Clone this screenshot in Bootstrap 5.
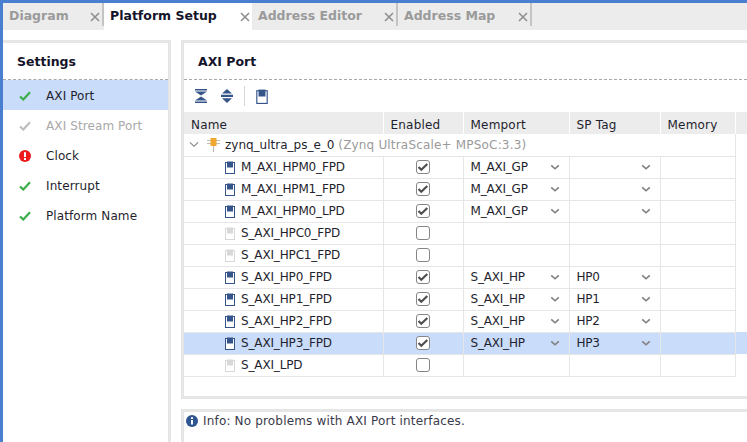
<!DOCTYPE html>
<html lang="en">
<head>
  <meta charset="UTF-8" />
  <meta name="viewport" content="width=device-width, initial-scale=1.0"/>
  <title>Platform Setup</title>
  <link href="https://cdn.jsdelivr.net/npm/bootstrap@5.3.3/dist/css/bootstrap.min.css" rel="stylesheet">
  <style>
    html, body {
      height: 100%;
    }

    body {
      font-family: "DejaVu Sans", sans-serif;
      font-size: 12px;
      color: #1f1f2e;
      background: #fff;
      border-top: 3px solid #4a7fd0;
      border-left: 3px solid #4a7fd0;
      overflow: hidden;
    }

    .tabstrip {
      height: 27px;
      background: #ececec;
      flex-wrap: nowrap;
    }

    .tabstrip .nav-link {
      height: 23px;
      padding: 4px 0 0 6px;
      display: flex;
      align-items: center;
      justify-content: space-between;
      font-weight: 700;
      font-size: 12.5px;
      color: #9a9a9a;
      border-right: 2px solid #c4c4c4;
      border-radius: 0;
    }

    .tabstrip .nav-link.active {
      height: 27px;
      padding-bottom: 4px;
      background: #fff;
      color: #14142a;
      border-right: 0;
    }

    .tab-diagram { width: 101px; }
    .tab-platform { width: 148px; }
    .tab-editor { width: 146px; }
    .tab-map { width: 134px; }

    .tab-close {
      width: 14px;
      height: 14px;
      display: block;
    }

    .workarea {
      padding-top: 10px;
      height: 412px;
    }

    .sidepane {
      width: 168px;
      flex: none;
      border-top: 3px solid #e6e6e6;
      border-right: 3px solid #e6e6e6;
    }

    .pane-title {
      height: 37px;
      padding-top: 2px;
      font-weight: 700;
      font-size: 12.5px;
      color: #14142a;
      border-bottom: 1px dashed #a8a8a8;
    }

    .sidepane .pane-title {
      padding-left: 14px;
    }

    .setting-row {
      height: 30px;
      padding: 2px 0 0 16px;
      gap: 15px;
      letter-spacing: 0.1px;
    }

    .setting-row.current {
      background: #c9dcfa;
    }

    .setting-row.off {
      color: #a8a8a8;
    }

    .mainarea {
      margin-left: 10px;
      min-width: 0;
    }

    .portpane {
      height: 359px;
      flex: none;
      border-top: 3px solid #e6e6e6;
      border-left: 3px solid #e6e6e6;
      border-bottom: 3px solid #e6e6e6;
    }

    .portpane .pane-title {
      padding-left: 14px;
    }

    .toolbar {
      height: 32px;
      padding-left: 11px;
      gap: 13px;
    }

    .tool-sep {
      width: 1px;
      height: 20px;
      background: #d8d8d8;
      margin: 0 -3px 0 -3px;
    }

    .port-table {
      table-layout: fixed;
      width: 563px;
      border-collapse: collapse;
    }

    .port-table th {
      height: 22px;
      padding: 4px 0 0 7px;
      font-weight: 400;
      letter-spacing: 0.2px;
      background: #ececec;
      border-right: 1px solid #fff;
    }

    .port-table td {
      height: 22px;
      padding: 0;
      border-right: 1px solid #e6e6e6;
      border-bottom: 1px solid #e6e6e6;
      vertical-align: middle;
    }

    .port-table td.filler {
      border: 0;
    }

    .port-table th.filler {
      border-right: 0;
    }

    .port-table tr.picked td {
      background: #c9dcfa;
    }

    .tree-cell {
      padding-left: 5px;
    }

    .tree-chevron {
      margin-right: 8px;
    }

    .tree-chip {
      margin-right: 5px;
    }

    .port-name {
      padding-left: 40px;
      gap: 5px;
      white-space: nowrap;
      letter-spacing: -0.15px;
    }

    .dim {
      color: #9a9a9a;
      letter-spacing: 0.18px;
    }

    .tick {
      appearance: none;
      display: block;
      width: 14px;
      height: 14px;
      margin: 0 auto;
      border: 1.5px solid #858585;
      border-radius: 3px;
      background: #fff;
    }

    .tick:checked {
      background: #fff url("data:image/svg+xml,%3Csvg xmlns='http://www.w3.org/2000/svg' viewBox='0 0 14 14'%3E%3Cpath d='M2.500 7l2.800 2.800 6-5.800' fill='none' stroke='%23505050' stroke-width='2.200'/%3E%3C/svg%3E") center/14px no-repeat;
    }

    .pick-cell {
      padding: 0 9px 0 7px;
      letter-spacing: -0.2px;
    }

    .infopane {
      margin-top: 10px;
      flex: 1;
      border-top: 3px solid #e6e6e6;
      border-left: 3px solid #e6e6e6;
      padding-left: 2px;
      gap: 5px;
      color: #3a3a4a;
      letter-spacing: 0.17px;
    }

    .info-mark {
      margin-top: 3px;
    }
  </style>
</head>
<body class="d-flex flex-column">

<svg width="0" height="0" class="position-absolute">
  <symbol id="ok" viewBox="0 0 12 10"><path d="M1 5.500l3.300 3L11 1.200" fill="none" stroke="#3aae4a" stroke-width="2.200"/></symbol>
  <symbol id="okoff" viewBox="0 0 12 10"><path d="M1 5.500l3.300 3L11 1.200" fill="none" stroke="#bdbdbd" stroke-width="2.200"/></symbol>
  <symbol id="port" viewBox="0 0 12 13"><rect x="1.500" y="1.500" width="9" height="11" fill="#fff" stroke="#34548a"/><rect x="3" y="0.500" width="6" height="6" fill="#34548a"/></symbol>
  <symbol id="portoff" viewBox="0 0 12 13"><rect x="1.500" y="1.500" width="9" height="11" fill="#fff" stroke="#d8d8d8"/><rect x="3" y="0.500" width="6" height="6" fill="#d8d8d8"/></symbol>
  <symbol id="down" viewBox="0 0 12 8"><path d="M1.500 1.500L6 5.500l4.500-4" fill="none" stroke="#808080" stroke-width="2"/></symbol>
  <symbol id="cross" viewBox="0 0 14 14"><path d="M3 3l8 8M11 3l-8 8" fill="none" stroke="#8f8f8f" stroke-width="1.600"/></symbol>
</svg>

<nav class="nav tabstrip">
  <a class="nav-link tab-diagram" href="#">Diagram<svg class="tab-close"><use href="#cross"/></svg></a>
  <a class="nav-link tab-platform active" href="#">Platform Setup<svg class="tab-close"><use href="#cross"/></svg></a>
  <a class="nav-link tab-editor" href="#">Address Editor<svg class="tab-close"><use href="#cross"/></svg></a>
  <a class="nav-link tab-map" href="#">Address Map<svg class="tab-close"><use href="#cross"/></svg></a>
</nav>

<div class="d-flex workarea">
  <aside class="sidepane">
    <div class="pane-title d-flex align-items-center">Settings</div>
    <div class="setting-row current d-flex align-items-center"><svg width="12" height="10"><use href="#ok"/></svg>AXI Port</div>
    <div class="setting-row off d-flex align-items-center"><svg width="12" height="10"><use href="#okoff"/></svg>AXI Stream Port</div>
    <div class="setting-row d-flex align-items-center">
      <svg width="12" height="12" viewBox="0 0 12 12"><circle cx="6" cy="6" r="6" fill="#ee1c1c"/><rect x="5" y="2.200" width="2" height="4.800" fill="#fff"/><rect x="5" y="8" width="2" height="2" fill="#fff"/></svg>Clock
    </div>
    <div class="setting-row d-flex align-items-center"><svg width="12" height="10"><use href="#ok"/></svg>Interrupt</div>
    <div class="setting-row d-flex align-items-center"><svg width="12" height="10"><use href="#ok"/></svg>Platform Name</div>
  </aside>

  <div class="mainarea flex-grow-1 d-flex flex-column">
    <section class="portpane">
      <div class="pane-title d-flex align-items-center">AXI Port</div>
      <div class="toolbar d-flex align-items-center">
        <svg width="13" height="14" viewBox="0 0 13 14"><path d="M0 0h12v1.600H0zM0 2.400h12L6 6.400zM6 7.600l6 4H0zM0 12.400h12V14H0z" fill="#34548a"/></svg>
        <svg width="13" height="14" viewBox="0 0 13 14"><path d="M6 0l5 4.600H1zM0 5.800h12v2.200H0zM1 9.200h10L6 14z" fill="#34548a"/></svg>
        <span class="tool-sep"></span>
        <svg width="14" height="15"><use href="#port"/></svg>
      </div>
      <table class="port-table">
        <colgroup>
          <col style="width:199px"><col style="width:80px"><col style="width:106px"><col style="width:91px"><col style="width:75px"><col style="width:12px">
        </colgroup>
        <thead>
          <tr><th>Name</th><th>Enabled</th><th>Memport</th><th>SP Tag</th><th>Memory</th><th class="filler"></th></tr>
        </thead>
        <tbody>
          <tr>
            <td colspan="5">
              <div class="tree-cell d-flex align-items-center">
                <svg class="tree-chevron" width="10" height="7" viewBox="0 0 12 8"><path d="M1 1.500L6 6l5-4.500" fill="none" stroke="#888" stroke-width="1.300"/></svg>
                <svg class="tree-chip" width="13" height="15" viewBox="0 0 13 15"><path d="M0 3.500h13M0 6.500h13M6.500 9v6" stroke="#c4bcae" stroke-width="1.200"/><rect x="3.500" y="1" width="6" height="8" fill="#f0a830"/></svg>
                <span>zynq_ultra_ps_e_0 <span class="dim">(Zynq UltraScale+ MPSoC:3.3)</span></span>
              </div>
            </td>
            <td class="filler"></td>
          </tr>
          <tr>
            <td><div class="port-name d-flex align-items-center"><svg width="12" height="13"><use href="#port"/></svg>M_AXI_HPM0_FPD</div></td>
            <td><input class="tick" type="checkbox" checked></td>
            <td><div class="pick-cell d-flex justify-content-between align-items-center">M_AXI_GP<svg width="10" height="7"><use href="#down"/></svg></div></td>
            <td><div class="pick-cell d-flex justify-content-between align-items-center"><span></span><svg width="10" height="7"><use href="#down"/></svg></div></td>
            <td></td><td class="filler"></td>
          </tr>
          <tr>
            <td><div class="port-name d-flex align-items-center"><svg width="12" height="13"><use href="#port"/></svg>M_AXI_HPM1_FPD</div></td>
            <td><input class="tick" type="checkbox" checked></td>
            <td><div class="pick-cell d-flex justify-content-between align-items-center">M_AXI_GP<svg width="10" height="7"><use href="#down"/></svg></div></td>
            <td><div class="pick-cell d-flex justify-content-between align-items-center"><span></span><svg width="10" height="7"><use href="#down"/></svg></div></td>
            <td></td><td class="filler"></td>
          </tr>
          <tr>
            <td><div class="port-name d-flex align-items-center"><svg width="12" height="13"><use href="#port"/></svg>M_AXI_HPM0_LPD</div></td>
            <td><input class="tick" type="checkbox" checked></td>
            <td><div class="pick-cell d-flex justify-content-between align-items-center">M_AXI_GP<svg width="10" height="7"><use href="#down"/></svg></div></td>
            <td><div class="pick-cell d-flex justify-content-between align-items-center"><span></span><svg width="10" height="7"><use href="#down"/></svg></div></td>
            <td></td><td class="filler"></td>
          </tr>
          <tr>
            <td><div class="port-name d-flex align-items-center"><svg width="12" height="13"><use href="#portoff"/></svg>S_AXI_HPC0_FPD</div></td>
            <td><input class="tick" type="checkbox"></td>
            <td></td><td></td><td></td><td class="filler"></td>
          </tr>
          <tr>
            <td><div class="port-name d-flex align-items-center"><svg width="12" height="13"><use href="#portoff"/></svg>S_AXI_HPC1_FPD</div></td>
            <td><input class="tick" type="checkbox"></td>
            <td></td><td></td><td></td><td class="filler"></td>
          </tr>
          <tr>
            <td><div class="port-name d-flex align-items-center"><svg width="12" height="13"><use href="#port"/></svg>S_AXI_HP0_FPD</div></td>
            <td><input class="tick" type="checkbox" checked></td>
            <td><div class="pick-cell d-flex justify-content-between align-items-center">S_AXI_HP<svg width="10" height="7"><use href="#down"/></svg></div></td>
            <td><div class="pick-cell d-flex justify-content-between align-items-center">HP0<svg width="10" height="7"><use href="#down"/></svg></div></td>
            <td></td><td class="filler"></td>
          </tr>
          <tr>
            <td><div class="port-name d-flex align-items-center"><svg width="12" height="13"><use href="#port"/></svg>S_AXI_HP1_FPD</div></td>
            <td><input class="tick" type="checkbox" checked></td>
            <td><div class="pick-cell d-flex justify-content-between align-items-center">S_AXI_HP<svg width="10" height="7"><use href="#down"/></svg></div></td>
            <td><div class="pick-cell d-flex justify-content-between align-items-center">HP1<svg width="10" height="7"><use href="#down"/></svg></div></td>
            <td></td><td class="filler"></td>
          </tr>
          <tr>
            <td><div class="port-name d-flex align-items-center"><svg width="12" height="13"><use href="#port"/></svg>S_AXI_HP2_FPD</div></td>
            <td><input class="tick" type="checkbox" checked></td>
            <td><div class="pick-cell d-flex justify-content-between align-items-center">S_AXI_HP<svg width="10" height="7"><use href="#down"/></svg></div></td>
            <td><div class="pick-cell d-flex justify-content-between align-items-center">HP2<svg width="10" height="7"><use href="#down"/></svg></div></td>
            <td></td><td class="filler"></td>
          </tr>
          <tr class="picked">
            <td><div class="port-name d-flex align-items-center"><svg width="12" height="13"><use href="#port"/></svg>S_AXI_HP3_FPD</div></td>
            <td><input class="tick" type="checkbox" checked></td>
            <td><div class="pick-cell d-flex justify-content-between align-items-center">S_AXI_HP<svg width="10" height="7"><use href="#down"/></svg></div></td>
            <td><div class="pick-cell d-flex justify-content-between align-items-center">HP3<svg width="10" height="7"><use href="#down"/></svg></div></td>
            <td></td><td class="filler"></td>
          </tr>
          <tr>
            <td><div class="port-name d-flex align-items-center"><svg width="12" height="13"><use href="#portoff"/></svg>S_AXI_LPD</div></td>
            <td><input class="tick" type="checkbox"></td>
            <td></td><td></td><td></td><td class="filler"></td>
          </tr>
        </tbody>
      </table>
    </section>

    <section class="infopane d-flex align-items-start">
      <svg class="info-mark" width="12" height="12" viewBox="0 0 12 12"><circle cx="6" cy="6" r="6" fill="#2f5590"/><rect x="5" y="5" width="2" height="4.500" fill="#fff"/><rect x="5" y="2.200" width="2" height="1.800" fill="#fff"/></svg>
      <span>Info: No problems with AXI Port interfaces.</span>
    </section>
  </div>
</div>

<script src="https://cdn.jsdelivr.net/npm/bootstrap@5.3.3/dist/js/bootstrap.bundle.min.js"></script>
</body>
</html>
